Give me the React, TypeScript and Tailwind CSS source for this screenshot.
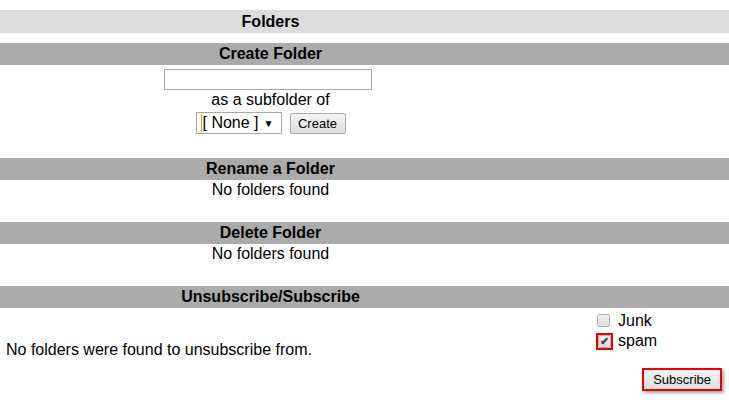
const Bar = ({ title, light }: { title: string; light?: boolean }) => (
	<div className={`w-full flex ${light ? "h-[23px] bg-[#dcdcdc] leading-[23px]" : "h-[22px] bg-[#ababab] leading-[22px]"}`}>
		<div className="w-[541px] text-center font-bold text-black">{title}</div>
	</div>
);

const Box = ({ checked }: { checked?: boolean }) => (
	<span className="w-[13px] h-[13px] border border-[#b4b4b4] rounded-[2px] bg-gradient-to-b from-[#f2f2f2] to-[#dcdcdc] flex items-center justify-center text-[11px] font-bold leading-none text-[#444]">
		{checked ? "✔" : ""}
	</span>
);

const App = () => {
	return (
		<div className="w-[729px] h-[400px] bg-white pt-[10px] text-[16px] text-black font-['Liberation_Sans',Arial,sans-serif] overflow-hidden">
			<Bar title="Folders" light />

			<div className="mt-[10px]">
				<Bar title="Create Folder" />
			</div>
			<div className="w-[541px] flex flex-col items-center pt-[4px]">
				<input type="text" className="w-[208px] h-[21px] mr-[6px] border border-[#a9a9a9] bg-white px-1 focus:outline-0" />
				<p className="leading-[18px] mt-[1px]">as a subfolder of</p>
				<div className="flex items-center gap-[8px] mt-[3px]">
					<div className="h-[22px] w-[86px] border border-[#a9a9a9] bg-white flex items-center justify-between pl-[4px] pr-[7px]">
						<span className="border-l border-[#e8a33d] pl-[1px] leading-[18px]">[ None ]</span>
						<span className="text-[10px]">▼</span>
					</div>
					<button className="h-[21px] w-[56px] border border-[#acacac] rounded-[2px] bg-gradient-to-b from-[#f4f4f4] to-[#dedede] text-[13px] leading-none">
						Create
					</button>
				</div>
			</div>

			<div className="mt-[24px]">
				<Bar title="Rename a Folder" />
			</div>
			<p className="w-[541px] text-center leading-[20px]">No folders found</p>

			<div className="mt-[22px]">
				<Bar title="Delete Folder" />
			</div>
			<p className="w-[541px] text-center leading-[20px]">No folders found</p>

			<div className="mt-[22px]">
				<Bar title="Unsubscribe/Subscribe" />
			</div>
			<div className="flex items-center justify-between pl-[6px] pr-[7px]">
				<p className="leading-[18px]">No folders were found to unsubscribe from.</p>
				<div className="flex flex-col w-[126px] pt-[3px]">
					<div className="flex items-center gap-[8px] pl-[1px] leading-[19px]">
						<Box />
						<span>Junk</span>
					</div>
					<div className="flex items-center gap-[5px] leading-[20px] mt-[1px]">
						<span className="border-2 border-[#ee0000]">
							<Box checked />
						</span>
						<span>spam</span>
					</div>
					<div className="flex justify-end mt-[17px]">
						<button className="h-[23px] px-[9px] border-2 border-[#ee0000] bg-gradient-to-b from-[#f4f4f4] to-[#dedede] text-[13px] leading-none shadow-[2px_2px_3px_rgba(0,0,0,0.35)]">
							Subscribe
						</button>
					</div>
				</div>
			</div>
		</div>
	);
};

export default App;
